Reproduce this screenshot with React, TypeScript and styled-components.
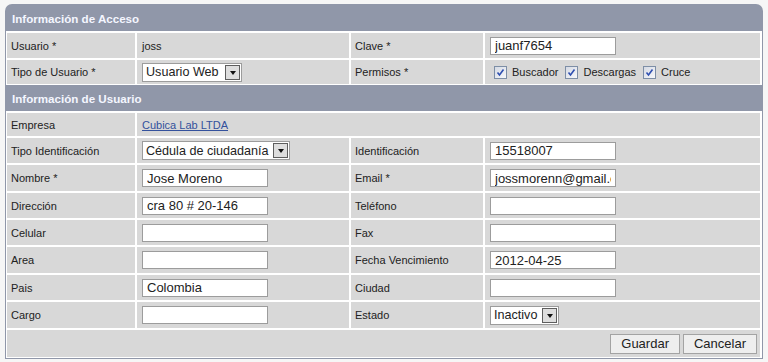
import styled, { createGlobalStyle } from "styled-components";

const GlobalStyle = createGlobalStyle`
  body {
    margin: 0;
    background: #f6f6f6;
    font-family: "Liberation Sans", Arial, sans-serif;
  }
`;

const Panel = styled.div`
  margin: 4px 0 0 5px;
  width: 758px;
  box-sizing: border-box;
  background-color: #9097a9;
  border-radius: 7px 7px 0 0;
  padding: 1px;
`;

const SectionHeader = styled.div`
  height: 26px;
  display: flex;
  align-items: center;
  padding-left: 6px;
  color: #f4f6ff;
  font-size: 11.6px;
  font-weight: bold;
`;

const SectionBody = styled.div`
  background-color: #ffffff;
  padding: 2px 2px 1px 1px;
  display: flex;
  flex-direction: column;
  gap: 2px;
`;

const Row = styled.div<{ $h: number }>`
  display: grid;
  grid-template-columns: 128px 212px 132px 1fr;
  gap: 2px;
  height: ${(p) => p.$h}px;
`;

const Cell = styled.div<{ $label?: boolean; $span?: number; $end?: boolean }>`
  background-color: #d8d8d8;
  display: flex;
  align-items: center;
  justify-content: ${(p) => (p.$end ? "flex-end" : "flex-start")};
  padding: ${(p) => (p.$end ? "0 3px 0 0" : p.$label ? "0 0 0 4px" : "0 0 0 5px")};
  grid-column: ${(p) => (p.$span ? `span ${p.$span}` : "auto")};
  font-size: 11px;
  color: #222;
  white-space: nowrap;
  overflow: hidden;
`;

const Link = styled.a`
  color: #33519c;
  text-decoration: underline;
  font-size: 11px;
`;

const TextInput = styled.input`
  width: 126px;
  height: 18px;
  box-sizing: border-box;
  border: 1px solid #9c9c9c;
  background: #fff;
  padding: 0 4px;
  font-family: "Liberation Sans", Arial, sans-serif;
  font-size: 13px;
  color: #222;
  outline: none;
  margin: 0;
  text-overflow: clip;
`;

const SelectBox = styled.div`
  display: inline-flex;
  align-items: center;
  height: 19px;
  box-sizing: border-box;
  border: 1px solid #9c9c9c;
  background: #fff;
  padding-left: 3px;
  font-size: 12.6px;
  color: #222;
`;

const SelectText = styled.span<{ $w: number }>`
  width: ${(p) => p.$w}px;
  margin-right: 2px;
  overflow: hidden;
`;

const ArrowBtn = styled.span`
  width: 15px;
  height: 15px;
  box-sizing: border-box;
  margin: 0 1px 0 0;
  border: 1px solid #5e5e5e;
  background: #dedede;
  display: flex;
  align-items: center;
  justify-content: center;
  &::after {
    content: "";
    border-left: 3.5px solid transparent;
    border-right: 3.5px solid transparent;
    border-top: 4px solid #111;
    margin-top: 1px;
  }
`;

const CheckGroup = styled.div`
  display: flex;
  align-items: center;
  margin-left: 4px;
`;

const CheckItem = styled.label`
  display: flex;
  align-items: center;
  gap: 5px;
  margin-right: 7px;
  font-size: 11px;
  color: #222;
`;

const CheckBox = styled.span`
  width: 13px;
  height: 13px;
  box-sizing: border-box;
  border: 1px solid #7d8ea6;
  background: linear-gradient(135deg, #d5dae4, #f6f7fa);
  display: flex;
  align-items: center;
  justify-content: center;
`;

const Button = styled.button`
  height: 20px;
  box-sizing: border-box;
  border: 1px solid #a3a3a3;
  background: #eeeeee;
  font-family: "Liberation Sans", Arial, sans-serif;
  font-size: 13px;
  color: #222;
  padding: 0 10px;
  margin-left: 3px;
`;

function Select({ value, w }: { value: string; w: number }) {
  return (
    <SelectBox>
      <SelectText $w={w}>{value}</SelectText>
      <ArrowBtn />
    </SelectBox>
  );
}

function Check({ label }: { label: string }) {
  return (
    <CheckItem>
      <CheckBox>
        <svg width="9" height="9" viewBox="0 0 9 9">
          <path d="M1.5 4.5 L3.5 7 L7.5 1.5" stroke="#2f4fb0" strokeWidth="1.6" fill="none" />
        </svg>
      </CheckBox>
      {label}
    </CheckItem>
  );
}

const userRows: Array<[string, string | null, string, string | null, number]> = [
  ["Nombre *", "Jose Moreno", "Email *", "jossmorenn@gmail.com", 26],
  ["Dirección", "cra 80 # 20-146", "Teléfono", "", 25],
  ["Celular", "", "Fax", "", 25],
  ["Area", "", "Fecha Vencimiento", "2012-04-25", 26],
  ["Pais", "Colombia", "Ciudad", "", 25],
];

function App() {
  return (
    <>
      <GlobalStyle />
      <Panel>
        <SectionHeader>Información de Acceso</SectionHeader>
        <SectionBody>
          <Row $h={25}>
            <Cell $label>Usuario *</Cell>
            <Cell>joss</Cell>
            <Cell $label>Clave *</Cell>
            <Cell>
              <TextInput readOnly defaultValue="juanf7654" />
            </Cell>
          </Row>
          <Row $h={24}>
            <Cell $label>Tipo de Usuario *</Cell>
            <Cell>
              <Select value="Usuario Web" w={77} />
            </Cell>
            <Cell $label>Permisos *</Cell>
            <Cell>
              <CheckGroup>
                <Check label="Buscador" />
                <Check label="Descargas" />
                <Check label="Cruce" />
              </CheckGroup>
            </Cell>
          </Row>
        </SectionBody>
        <SectionHeader>Información de Usuario</SectionHeader>
        <SectionBody>
          <Row $h={23}>
            <Cell $label>Empresa</Cell>
            <Cell $span={3}>
              <Link href="#">Cubica Lab LTDA</Link>
            </Cell>
          </Row>
          <Row $h={25}>
            <Cell $label>Tipo Identificación</Cell>
            <Cell>
              <Select value="Cédula de ciudadanía" w={125} />
            </Cell>
            <Cell $label>Identificación</Cell>
            <Cell>
              <TextInput readOnly defaultValue="15518007" />
            </Cell>
          </Row>
          {userRows.map(([l1, v1, l2, v2, h]) => (
            <Row $h={h} key={l1}>
              <Cell $label>{l1}</Cell>
              <Cell>{v1 !== null && <TextInput readOnly defaultValue={v1} />}</Cell>
              <Cell $label>{l2}</Cell>
              <Cell>{v2 !== null && <TextInput readOnly defaultValue={v2} />}</Cell>
            </Row>
          ))}
          <Row $h={26}>
            <Cell $label>Cargo</Cell>
            <Cell>
              <TextInput readOnly defaultValue="" />
            </Cell>
            <Cell $label>Estado</Cell>
            <Cell>
              <Select value="Inactivo" w={46} />
            </Cell>
          </Row>
          <Row $h={27}>
            <Cell $span={4} $end>
              <Button>Guardar</Button>
              <Button>Cancelar</Button>
            </Cell>
          </Row>
        </SectionBody>
      </Panel>
    </>
  );
}

export default App;
